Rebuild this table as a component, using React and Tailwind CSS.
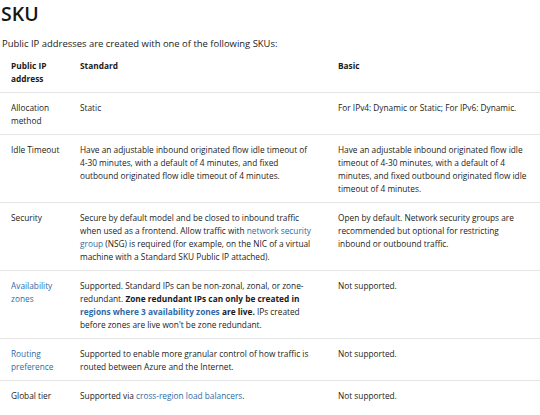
import React from "react";

const A = ({ children, bold }) => (
  <a href="#" className={bold ? "text-[#2f6aa6] font-bold" : "text-[#2f6aa6]"}>
    {children}
  </a>
);

const idle = (
  <>
    Have an adjustable inbound originated flow idle timeout of <span className="whitespace-nowrap">4-30</span> minutes, with a default of 4 minutes, and fixed outbound originated flow idle timeout of 4 minutes.
  </>
);

const rows = [
  {
    a: "Allocation method",
    b: "Static",
    c: "For IPv4: Dynamic or Static; For IPv6: Dynamic.",
  },
  {
    a: "Idle Timeout",
    b: idle,
    c: idle,
  },
  {
    a: "Security",
    b: (
      <>
        Secure by default model and be closed to inbound traffic when used as a frontend. Allow traffic with{" "}
        <A>network security group</A> (NSG) is required (for example, on the NIC of a virtual machine with a Standard SKU Public IP attached).
      </>
    ),
    c: "Open by default. Network security groups are recommended but optional for restricting inbound or outbound traffic.",
  },
  {
    a: <A>Availability zones</A>,
    b: (
      <>
        Supported. Standard IPs can be non-zonal, zonal, or zone-redundant.{" "}
        <strong className="font-bold">
          Zone redundant IPs can only be created in <A bold>regions where 3 availability zones</A> are live.
        </strong>{" "}
        IPs created before zones are live won't be zone redundant.
      </>
    ),
    c: "Not supported.",
  },
  {
    a: <A>Routing preference</A>,
    b: "Supported to enable more granular control of how traffic is routed between Azure and the Internet.",
    c: "Not supported.",
  },
  {
    a: "Global tier",
    b: (
      <>
        Supported via <A>cross-region load balancers</A>.
      </>
    ),
    c: "Not supported.",
    last: true,
  },
];

export default function App() {
  return (
    <div className="w-[540px] h-[415px] overflow-hidden bg-white text-[#1b1b1b] font-['Open_Sans',sans-serif]">
      <h1 className="pl-[1px] text-[19.5px] leading-[27px] font-semibold text-[#161616]">SKU</h1>
      <p className="mt-[10px] mb-[1px] pl-[2px] text-[9.45px] leading-[13px]">
        Public IP addresses are created with one of the following SKUs:
      </p>
      <div className="grid grid-cols-[69px_258px_1fr] text-[8.3px] leading-[13px]">
        <div className="pl-[11px] pr-[4px] pt-[8px] pb-[7px] font-bold border-b border-[#e6e6e6]">Public IP address</div>
        <div className="pl-[11px] pr-[9px] pt-[8px] pb-[7px] font-bold border-b border-[#e6e6e6]">Standard</div>
        <div className="pl-[11px] pr-[7px] pt-[8px] pb-[7px] font-bold border-b border-[#e6e6e6]">Basic</div>
        {rows.map((r, i) => (
          <React.Fragment key={i}>
            <div className={r.last ? "pl-[11px] pr-[4px] pt-[8px] pb-[7px]" : "pl-[11px] pr-[4px] pt-[8px] pb-[7px] border-b border-[#e6e6e6]"}>{r.a}</div>
            <div className={r.last ? "pl-[11px] pr-[9px] pt-[8px] pb-[7px]" : "pl-[11px] pr-[9px] pt-[8px] pb-[7px] border-b border-[#e6e6e6]"}>{r.b}</div>
            <div className={r.last ? "pl-[11px] pr-[7px] pt-[8px] pb-[7px]" : "pl-[11px] pr-[7px] pt-[8px] pb-[7px] border-b border-[#e6e6e6]"}>{r.c}</div>
          </React.Fragment>
        ))}
      </div>
    </div>
  );
}
